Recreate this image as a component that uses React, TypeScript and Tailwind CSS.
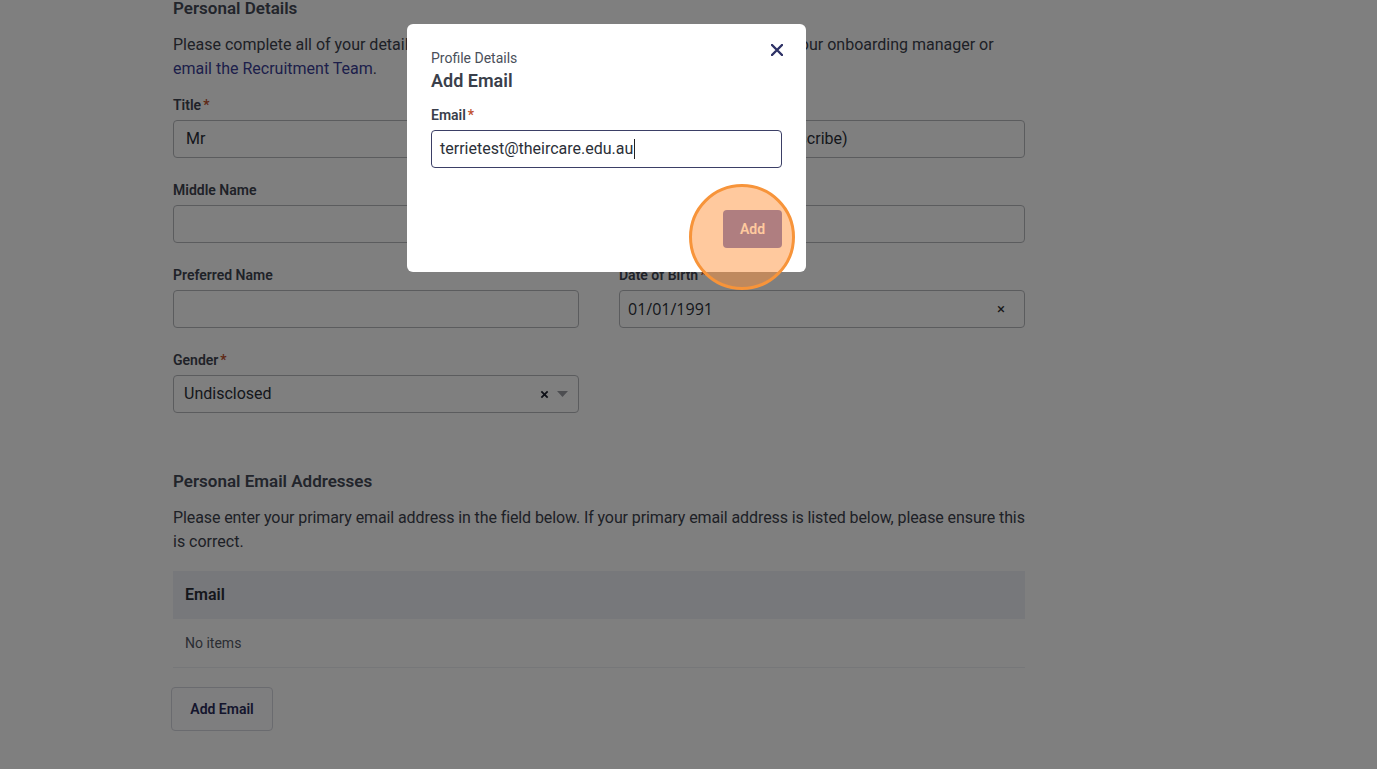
import React from "react";

const Req = () => <span className="ml-[2px] text-[#c0502c]">*</span>;

function Field({ label, required, children }: { label?: string; required?: boolean; children: React.ReactNode }) {
  return (
    <div className="flex flex-col">
      <div className="h-[20px] text-[14px] leading-[20px] font-semibold text-[#3f4450]">
        {label}
        {required && <Req />}
      </div>
      <div className="mt-[5px]">{children}</div>
    </div>
  );
}

function Box({ children, className = "" }: { children?: React.ReactNode; className?: string }) {
  return (
    <div className={"flex h-[38px] items-center rounded-[4px] border border-[#b7b9bd] bg-white text-[16px] text-[#2b2f38] " + className}>
      {children}
    </div>
  );
}

export default function App() {
  return (
    <div className="relative min-h-screen bg-white" style={{ fontFamily: "Roboto, 'Noto Sans', sans-serif" }}>
      <div className="ml-[173px] w-[852px] pb-[40px]">
        <h2 className="mt-[-1px] text-[17px] leading-[18px] font-semibold text-[#454a57]">Personal Details</h2>
        <p className="mt-[16px] whitespace-nowrap text-[16px] leading-[24px] text-[#3d424d]">
          Please complete all of your details. If you have any questions or queries please contact your onboarding manager or
          <br />
          <span className="text-[#3b3f96]">email the Recruitment Team</span>.
        </p>
        <div className="mt-[14px] grid grid-cols-2 gap-x-[40px] gap-y-[22px]">
          <Field label="Title" required>
            <Box className="pl-[12px]">Mr</Box>
          </Field>
          <Field label="Pronouns">
            <Box className="pl-[9px]">Other (Prefers to self describe)</Box>
          </Field>
          <Field label="Middle Name">
            <Box />
          </Field>
          <Field label="Last Name" required>
            <Box />
          </Field>
          <Field label="Preferred Name">
            <Box />
          </Field>
          <Field label="Date of Birth" required>
            <Box className="justify-between pl-[8px] pr-[19px]">
              <span style={{ fontFamily: "'Open Sans', sans-serif" }}>01/01/1991</span>
              <span className="text-[15px] text-[#333]">×</span>
            </Box>
          </Field>
          <Field label="Gender" required>
            <Box className="justify-between pl-[10px] pr-[10px]">
              <span>Undisclosed</span>
              <span className="flex items-center gap-[8px]">
                <svg width="9" height="9" viewBox="0 0 10 10">
                  <path d="M1.5 1.5 L8.5 8.5 M8.5 1.5 L1.5 8.5" stroke="#1f2330" strokeWidth="2" />
                </svg>
                <svg width="11" height="6" viewBox="0 0 11 6">
                  <path d="M0 0 L11 0 L5.5 6 Z" fill="#9a9ca3" />
                </svg>
              </span>
            </Box>
          </Field>
        </div>

        <h2 className="mt-[56px] text-[17px] leading-[24px] font-semibold text-[#454a57]">Personal Email Addresses</h2>
        <p className="mt-[13px] text-[16px] leading-[24px] text-[#3d424d]">
          <span className="whitespace-nowrap tracking-[-0.1px]">
            Please enter your primary email address in the field below. If your primary email address is listed below, please ensure this
          </span>
          <br />
          is correct.
        </p>
        <div className="mt-[17px]">
          <div className="flex h-[48px] items-center bg-[#eef0f7] pl-[12px] text-[16px] font-semibold text-[#2b2f38]">Email</div>
          <div className="flex h-[49px] items-center border-b border-[#eceef2] pl-[12px] text-[14px] text-[#555a66]">No items</div>
        </div>
        <button className="mt-[19px] ml-[-2px] h-[44px] w-[102px] rounded-[4px] border border-[#d5d7de] bg-[#fcfcff] text-[14px] font-semibold text-[#2b2d5a]">
          Add Email
        </button>
      </div>

      {/* overlay */}
      <div className="fixed inset-0 bg-black/50" />

      {/* modal */}
      <div className="fixed left-[407px] top-[24px] w-[399px] rounded-[6px] bg-white px-[24px] pt-[24px] pb-[24px]">
        <button className="absolute right-[22px] top-[19px] flex h-[14px] w-[14px] items-center justify-center">
          <svg width="12" height="12" viewBox="0 0 12 12">
            <path d="M1 1 L11 11 M11 1 L1 11" stroke="#2e3266" strokeWidth="2.4" strokeLinecap="round" />
          </svg>
        </button>
        <div className="text-[14px] leading-[20px] text-[#4a4f5a]">Profile Details</div>
        <div className="mt-[1px] text-[18px] leading-[24px] font-semibold text-[#3a3f4b]">Add Email</div>
        <div className="mt-[12px] text-[14px] leading-[20px] font-semibold text-[#3a3f4b]">
          Email
          <Req />
        </div>
        <div className="mt-[5px] flex h-[38px] items-center rounded-[4px] border border-[#3b3f66] pl-[8px] text-[16px] text-[#2b2f38]">
          terrietest@theircare.edu.au
          <span className="ml-[1px] inline-block h-[20px] w-[1px] bg-[#222]" />
        </div>
        <div className="mt-[42px] flex justify-end">
          <button className="h-[38px] w-[59px] rounded-[4px] bg-[#5f69c2] text-[14px] font-semibold text-white">Add</button>
        </div>
      </div>

      {/* click highlight */}
      <div className="pointer-events-none fixed left-[689px] top-[184px] h-[106px] w-[106px] rounded-full border-[3px] border-[#f7943a] bg-[#ff943d]/50" />
    </div>
  );
}
